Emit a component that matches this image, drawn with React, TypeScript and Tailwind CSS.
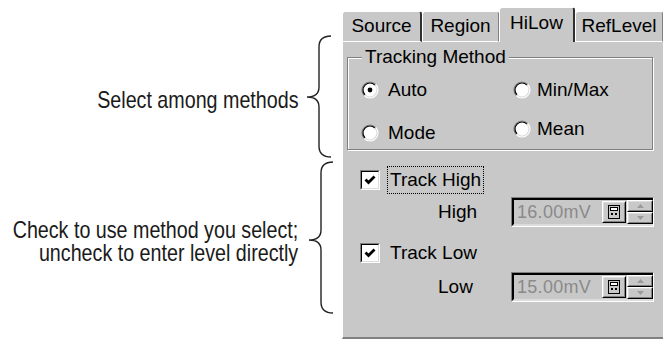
import React from "react";

const ui = "font-['Liberation_Sans',Arial,sans-serif] text-[19px] text-black";

function Brace({ h, tip }: { h: number; tip: number }) {
  const d = `M25 1 C17 1 13 4 13 12 L13 ${tip - 10} C13 ${tip - 4} 9 ${tip} 1 ${tip} C9 ${tip} 13 ${tip + 4} 13 ${tip + 10} L13 ${h - 12} C13 ${h - 5} 17 ${h - 1} 25 ${h - 1}`;
  return (
    <svg width="26" height={h} viewBox={`0 0 26 ${h}`} className="shrink-0">
      <path d={d} fill="none" stroke="#222" strokeWidth="1.4" />
    </svg>
  );
}

function Radio({ on }: { on?: boolean }) {
  return (
    <svg width="18" height="18" viewBox="0 0 18 18" className="shrink-0">
      <circle cx="9" cy="9" r="8" fill="#fff" />
      <path d="M3.34 14.66 A8 8 0 0 1 14.66 3.34" fill="none" stroke="#808080" strokeWidth="1.2" />
      <path d="M14.66 3.34 A8 8 0 0 1 3.34 14.66" fill="none" stroke="#fff" strokeWidth="1.2" />
      <path d="M4.05 13.95 A7 7 0 0 1 13.95 4.05" fill="none" stroke="#000" strokeWidth="1.2" />
      <path d="M13.95 4.05 A7 7 0 0 1 4.05 13.95" fill="none" stroke="#dcdcdc" strokeWidth="1.2" />
      {on && <circle cx="9" cy="9" r="2.4" fill="#000" />}
    </svg>
  );
}

function Check() {
  return (
    <div className="w-[20px] h-[20px] shrink-0 border border-t-[#808080] border-l-[#808080] border-b-white border-r-white">
      <div className="w-full h-full border border-t-black border-l-black border-b-[#dcdcdc] border-r-[#dcdcdc] bg-white flex items-center justify-center">
        <svg width="14" height="14" viewBox="0 0 14 14">
          <polyline points="2.5,6.5 5.5,9.5 11.5,3.5" fill="none" stroke="#000" strokeWidth="2.8" />
        </svg>
      </div>
    </div>
  );
}

function Raised({ className, children }: { className?: string; children?: React.ReactNode }) {
  return (
    <div className={`border border-t-white border-l-white border-b-black border-r-black ${className ?? ""}`}>
      <div className="w-full h-full border border-t-[#dcdcdc] border-l-[#dcdcdc] border-b-[#808080] border-r-[#808080] flex items-center justify-center">
        {children}
      </div>
    </div>
  );
}

function LevelBox({ value }: { value: string }) {
  return (
    <div className="w-[143px] h-[30px] border border-t-[#808080] border-l-[#808080] border-b-white border-r-white">
      <div className="w-full h-full border-2 border-t-black border-l-black border-b-[#dcdcdc] border-r-[#dcdcdc] border-r-0 flex items-stretch">
        <span className="flex-1 pl-[3px] flex items-center text-[18px] text-[#8a8a8a] tracking-[0.3px]">{value}</span>
        <Raised className="w-[24px] my-[1px]">
          <svg width="12" height="14" viewBox="0 0 12 14">
            <rect x="0.5" y="0.5" width="11" height="13" fill="#c8c8c8" stroke="#000" />
            <rect x="2.5" y="2.5" width="7" height="3" fill="#fff" stroke="#000" />
            <rect x="3" y="8" width="2" height="2" fill="#000" />
            <rect x="7" y="8" width="2" height="2" fill="#000" />
          </svg>
        </Raised>
        <div className="w-[26px] flex flex-col ml-[1px]">
          <Raised className="flex-1">
            <svg width="7" height="4" viewBox="0 0 7 4">
              <polygon points="3.5,0 7,4 0,4" fill="#9a9a9a" />
            </svg>
          </Raised>
          <Raised className="flex-1">
            <svg width="7" height="4" viewBox="0 0 7 4">
              <polygon points="0,0 7,0 3.5,4" fill="#9a9a9a" />
            </svg>
          </Raised>
        </div>
      </div>
    </div>
  );
}

export default function App() {
  return (
    <div className="w-[663px] h-[341px] bg-white flex overflow-hidden">
      {/* Annotations */}
      <div className="w-[342px] flex flex-col pt-[35px] font-['Liberation_Sans',Arial,sans-serif] text-[24px] leading-[23px] text-[#1a1a1a]">
        <div className="h-[123px] flex items-center justify-end gap-[8px] pr-[10px]">
          <span className="mt-[6px] shrink-0 whitespace-nowrap scale-x-[0.82] origin-right">Select among methods</span>
          <Brace h={123} tip={62} />
        </div>
        <div className="mt-[3px] h-[153px] flex items-center justify-end gap-[10px] pr-[8px]">
          <span className="mt-[6px] shrink-0 whitespace-nowrap text-right scale-x-[0.82] origin-right">
            Check to use method you select;
            <br />
            uncheck to enter level directly
          </span>
          <Brace h={153} tip={79} />
        </div>
      </div>

      {/* Dialog panel */}
      <div className={`flex-1 flex flex-col ${ui}`}>
        <div className="h-[42px] flex items-end">
          <div className="w-[80px] h-[31px] rounded-t-[3px] border border-white border-r-2 border-r-[#303030] bg-[#c8c8c8] flex items-center justify-center">Source</div>
          <div className="w-[77px] h-[31px] rounded-t-[3px] border border-white border-r-[#808080] bg-[#c8c8c8] flex items-center justify-center">Region</div>
          <div className="w-[76px] h-[35px] rounded-t-[3px] border-t border-l border-white border-r-2 border-r-[#303030] bg-[#c8c8c8] flex items-center justify-center pb-[3px]">HiLow</div>
          <div className="w-[88px] h-[31px] rounded-t-[3px] border border-white border-r-[#808080] bg-[#c8c8c8] flex items-center justify-center">RefLevel</div>
        </div>

        <div className="h-[297px] bg-[#c8c8c8] border-l border-white border-b-2 border-b-[#808080] flex flex-col">
          <fieldset className="mt-[5px] ml-[4px] mr-[10px] border border-[#808080] shadow-[inset_1px_1px_0_#fff,1px_1px_0_#fff]">
            <legend className="ml-[14px] px-[3px] leading-[20px] bg-[#c8c8c8]">Tracking Method</legend>
            <div className="flex pl-[13px] pt-[13px] pb-[6px]">
              <div className="w-[152px] flex flex-col gap-[23px]">
                <div className="h-[20px] flex items-center gap-[9px]"><Radio on />Auto</div>
                <div className="h-[20px] flex items-center gap-[9px]"><Radio />Mode</div>
              </div>
              <div className="flex flex-col gap-[19px]">
                <div className="h-[20px] flex items-center gap-[6px]"><Radio />Min/Max</div>
                <div className="h-[20px] flex items-center gap-[6px]"><Radio />Mean</div>
              </div>
            </div>
          </fieldset>

          <div className="mt-[16px] ml-[17px] h-[28px] flex items-center gap-[7px]">
            <Check />
            <span className="h-[28px] px-[2px] flex items-center border border-dotted border-black">Track High</span>
          </div>
          <div className="mt-[3px] ml-[95px] flex items-center">
            <span className="w-[73px]">High</span>
            <LevelBox value="16.00mV" />
          </div>

          <div className="mt-[12px] ml-[17px] h-[28px] flex items-center gap-[10px]">
            <Check />
            <span>Track Low</span>
          </div>
          <div className="mt-[5px] ml-[95px] flex items-center">
            <span className="w-[73px]">Low</span>
            <LevelBox value="15.00mV" />
          </div>
        </div>
      </div>
    </div>
  );
}
